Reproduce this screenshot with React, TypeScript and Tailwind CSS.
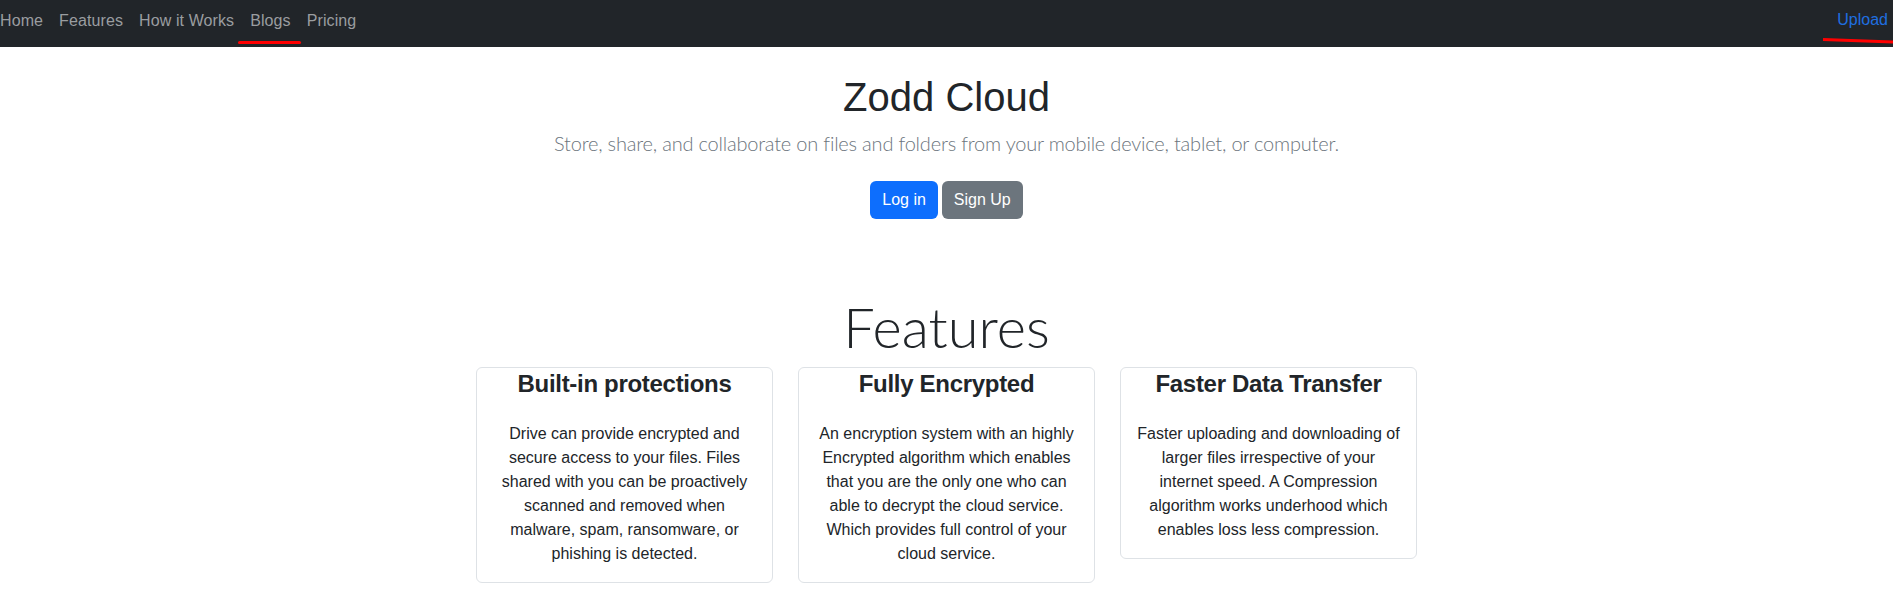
import React from "react";

const navLinks = ["Home", "Features", "How it Works", "Blogs", "Pricing"];

const features = [
  {
    title: "Built-in protections",
    text: "Drive can provide encrypted and secure access to your files. Files shared with you can be proactively scanned and removed when malware, spam, ransomware, or phishing is detected.",
  },
  {
    title: "Fully Encrypted",
    text: "An encryption system with an highly Encrypted algorithm which enables that you are the only one who can able to decrypt the cloud service. Which provides full control of your cloud service.",
  },
  {
    title: "Faster Data Transfer",
    text: "Faster uploading and downloading of larger files irrespective of your internet speed. A Compression algorithm works underhood which enables loss less compression.",
  },
];

export default function App() {
  return (
    <div className="min-h-screen bg-white font-['Liberation_Sans',sans-serif] text-[#212529]">
      {/* navbar */}
      <nav className="flex h-[47px] items-start justify-between overflow-hidden bg-[#212529]">
        <ul className="flex gap-4 pt-[9px]">
          {navLinks.map((label) => (
            <li key={label} className="relative">
              <a href="#" className="block text-[16px] leading-6 tracking-[0.1px] text-[#9a9da0]">
                {label}
              </a>
              {label === "Blogs" && (
                <span className="absolute -left-[12px] -right-[10px] top-[32px] h-[3px] rounded-full bg-[#ff0000]" />
              )}
            </li>
          ))}
        </ul>
        <div className="relative mr-[5px] pt-[8px]">
          <a href="#" className="block text-[16px] leading-6 text-[#1f6fe0]">
            Upload
          </a>
          <span className="absolute -left-[14px] top-[38px] h-[3px] w-[74px] origin-left rotate-[2deg] bg-[#ff0000]" />
        </div>
      </nav>

      {/* hero */}
      <section className="mt-[26px] flex flex-col items-center text-center">
        <h1 className="text-[40px] leading-[48px] font-normal">Zodd Cloud</h1>
        <p className="mt-[7px] font-['Lato',sans-serif] text-[20px] leading-[30px] font-light tracking-[-0.2px] text-[#6c757d]">
          Store, share, and collaborate on files and folders from your mobile device, tablet, or computer.
        </p>
        <div className="mt-[23px] flex gap-1">
          <button className="h-[38px] rounded-md bg-[#0d6efd] px-3 text-[16px] text-white">Log in</button>
          <button className="h-[38px] rounded-md bg-[#6c757d] px-3 text-[16px] text-white">Sign Up</button>
        </div>
      </section>

      {/* features */}
      <section className="mt-[74px] flex flex-col items-center">
        <h2 className="font-['Lato',sans-serif] text-[56px] leading-[67px] font-light">Features</h2>
        <div className="mt-[7px] flex items-start justify-center gap-[25px]">
          {features.map((f) => (
            <div key={f.title} className="w-[297px] rounded-md border border-[#dee2e6] text-center">
              <h4 className="mb-2 pt-[1px] text-[24px] leading-[29px] font-bold tracking-[-0.3px]">{f.title}</h4>
              <div className="p-4">
                <p className="text-[16px] leading-6">{f.text}</p>
              </div>
            </div>
          ))}
        </div>
      </section>
    </div>
  );
}
